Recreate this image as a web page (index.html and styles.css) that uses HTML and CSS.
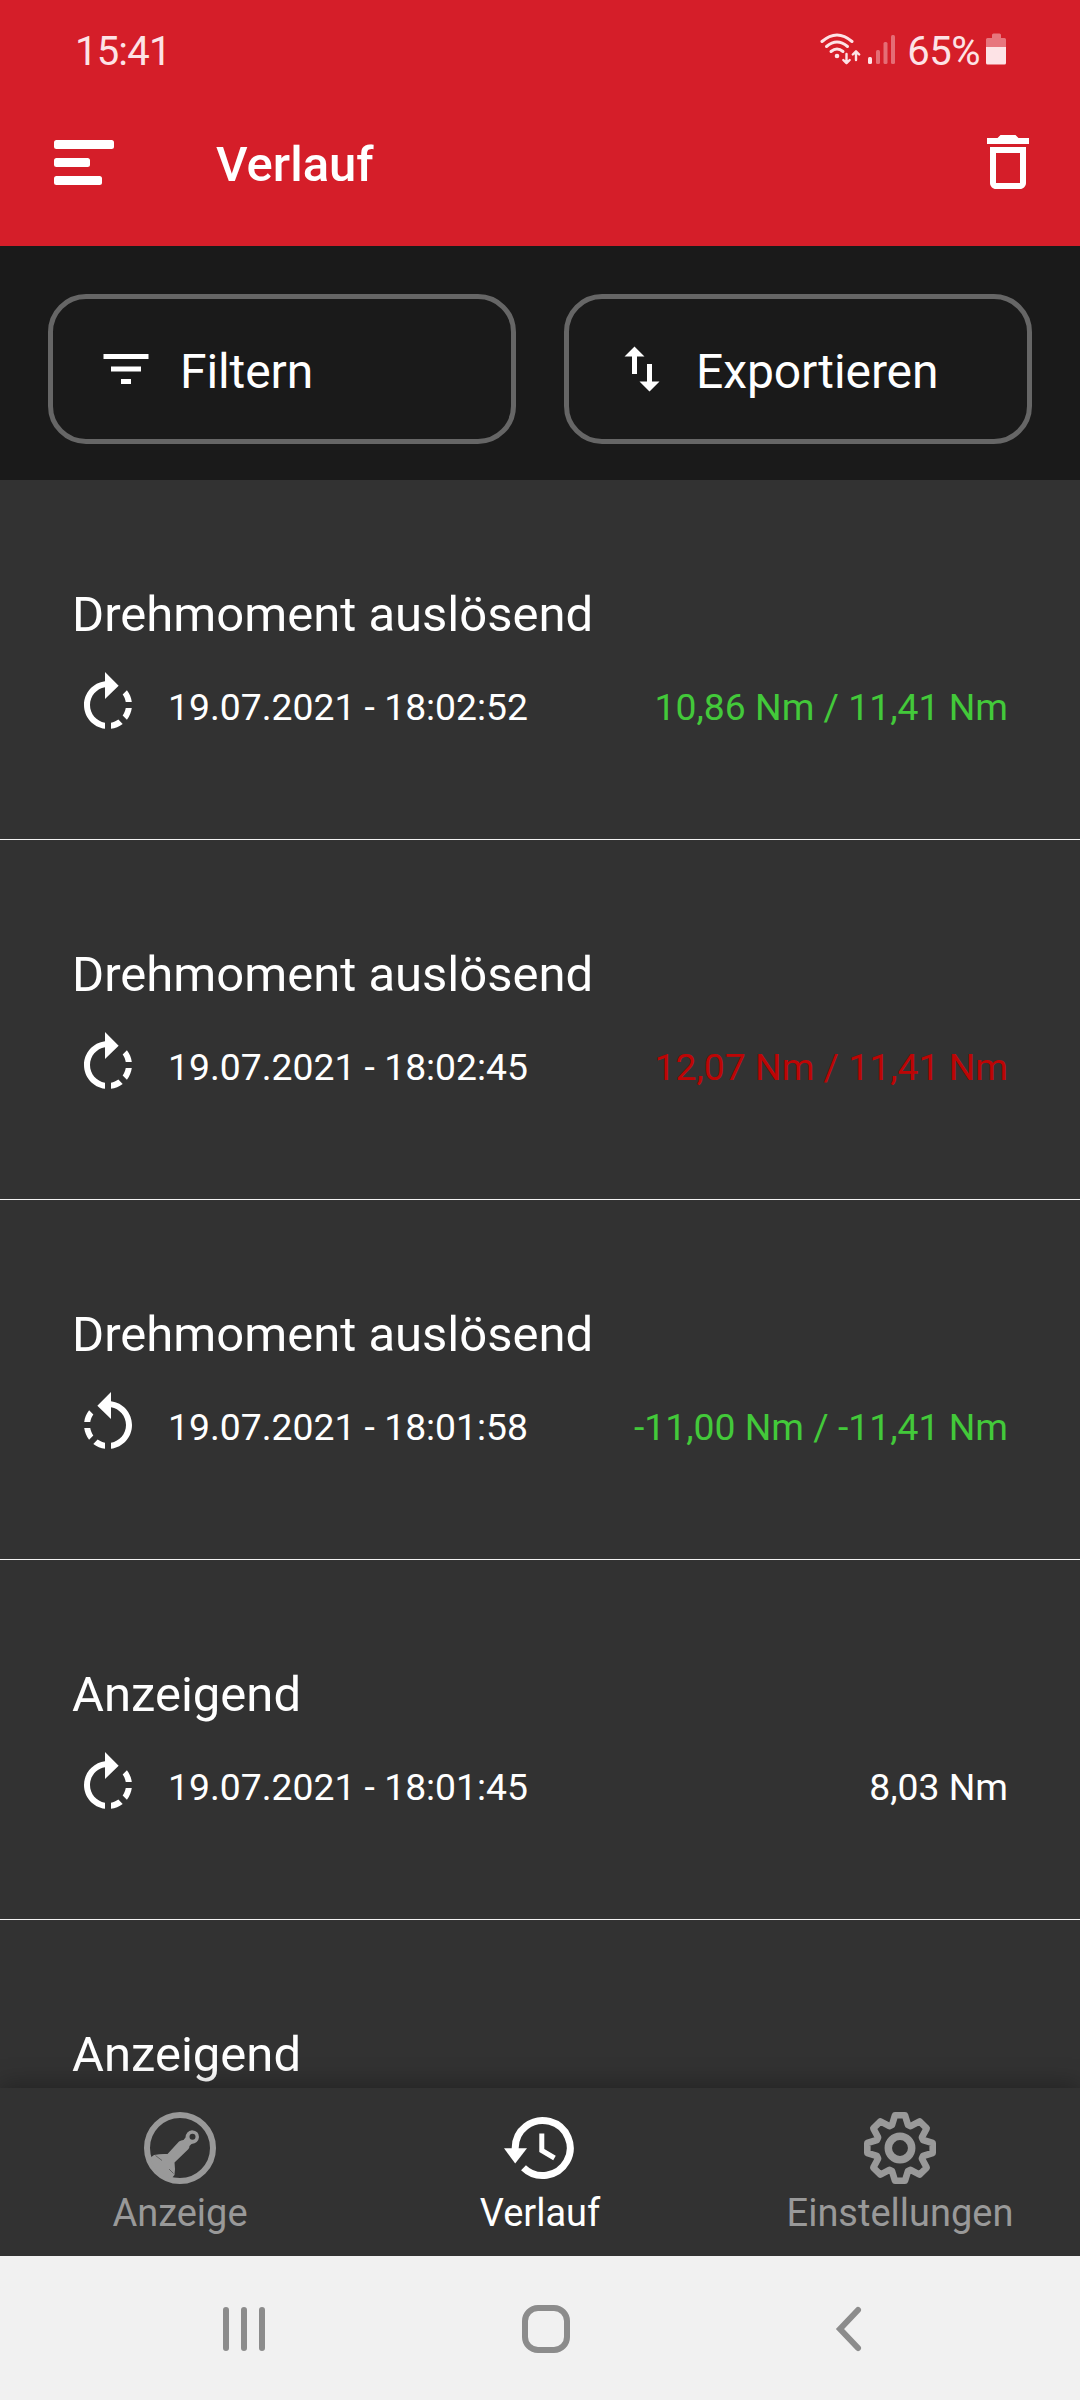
FILE: index.html
```html
<!DOCTYPE html>
<html lang="de">
<head>
<meta charset="utf-8">
<title>Verlauf</title>
<link rel="stylesheet" href="styles.css">
</head>
<body>
<svg class="sprite" aria-hidden="true">
  <symbol id="rotate-right" viewBox="0 0 24 24"><path d="M15.55 5.55L11 1v3.07C7.06 4.56 4 7.92 4 12s3.05 7.44 7 7.93v-2.02c-2.84-.48-5-2.94-5-5.91s2.16-5.43 5-5.91V10l4.55-4.45zM19.93 11c-.17-1.39-.72-2.73-1.62-3.89l-1.42 1.42c.54.75.88 1.6 1.02 2.47h2.02zM13 17.9v2.02c1.39-.17 2.74-.71 3.9-1.61l-1.44-1.44c-.75.54-1.59.89-2.46 1.03zm3.89-2.42l1.42 1.41c.9-1.16 1.45-2.5 1.62-3.89h-2.02c-.14.87-.48 1.72-1.02 2.48z"/></symbol>
  <symbol id="rotate-left" viewBox="0 0 24 24"><path d="M7.11 8.53L5.7 7.11C4.8 8.27 4.24 9.61 4.07 11h2.02c.14-.87.49-1.72 1.02-2.47zM6.09 13H4.07c.17 1.39.72 2.73 1.62 3.89l1.41-1.42c-.52-.75-.87-1.59-1.01-2.47zm1.01 5.32c1.16.9 2.51 1.44 3.9 1.61V17.9c-.87-.15-1.71-.49-2.46-1.03L7.1 18.32zM13 4.07V1L8.45 5.55 13 10V6.09c2.84.48 5 2.94 5 5.91s-2.16 5.43-5 5.91v2.02c3.95-.49 7-3.85 7-7.93s-3.05-7.44-7-7.93z"/></symbol>
</svg>
<div class="screen">
  <header class="header">
    <div class="status">
      <span class="clock">15:41</span>
      <div class="status-right">
        <svg class="status-icons" width="78" height="36" viewBox="0 0 78 36">
          <g fill="none" stroke="currentColor" stroke-width="3" stroke-linecap="round">
            <path d="M3 10.5Q18 -2.5 33 10.5"/>
            <path d="M7.5 15.5Q18 6.5 28.500 15.500"/>
            <path d="M12 20.500Q18 15.500 24 20.500"/>
          </g>
          <circle cx="18" cy="25" r="2.300" fill="currentColor"/>
          <g fill="none" stroke="currentColor" stroke-width="2.400" stroke-linecap="round" stroke-linejoin="round">
            <path d="M27.500 23v9M24.300 29l3.200 3.200 3.200-3.200"/>
            <path d="M37 29v-8.500M33.800 23.500l3.200-3.200 3.200 3.200"/>
          </g>
          <rect x="49" y="26" width="4" height="7" rx="1.500" fill="currentColor"/>
          <g fill="currentColor" opacity=".4">
            <rect x="57" y="19" width="4" height="14" rx="1.500"/>
            <rect x="64.500" y="11" width="4" height="22" rx="1.500"/>
            <rect x="72" y="4" width="4" height="29" rx="1.500"/>
          </g>
        </svg>
        <span class="percent">65%</span>
        <svg class="battery" width="20" height="32" viewBox="0 0 20 32">
          <path opacity=".45" fill="currentColor" d="M6 2q0-1.500 1.500-1.500h6q1.500 0 1.500 1.500v3h3.500q1.500 0 1.500 1.500V14H0V6.500Q0 5 1.500 5H6z"/>
          <path fill="currentColor" d="M0 14h20v16q0 1.500-1.500 1.500h-17Q0 31.500 0 30z"/>
        </svg>
      </div>
    </div>
    <div class="appbar">
      <svg class="menu" width="60" height="46" viewBox="0 0 60 46" fill="#fff"><rect width="60" height="9" rx="2.500"/><rect y="18" width="36" height="9" rx="2.500"/><rect y="36" width="48" height="9" rx="2.500"/></svg>
      <h1 class="title">Verlauf</h1>
      <svg class="icon-72" viewBox="0 0 24 24"><path d="M6 19c0 1.100.9 2 2 2h8c1.100 0 2-.9 2-2V7H6v12zM8 9h8v10H8V9zm7.500-5l-1-1h-5l-1 1H5v2h14V4h-3.500z"/></svg>
    </div>
  </header>

  <div class="actions">
    <button class="action"><svg class="icon-60" viewBox="0 0 24 24"><path d="M10 18h4v-2h-4v2zM3 6v2h18V6H3zm3 7h12v-2H6v2z"/></svg><span>Filtern</span></button>
    <button class="action"><svg class="icon-60" viewBox="0 0 24 24"><path d="M16 17.010V10h-2v7.010h-3L15 21l4-3.990h-3zM9 3L5 6.990h3V14h2V6.990h3L9 3z"/></svg><span>Exportieren</span></button>
  </div>

  <main class="list">
    <article class="entry">
      <h2 class="entry-title">Drehmoment auslösend</h2>
      <div class="entry-row"><svg class="icon-72"><use href="#rotate-right"/></svg><span class="date">19.07.2021 - 18:02:52</span><span class="value ok">10,86 Nm / 11,41 Nm</span></div>
    </article>
    <article class="entry">
      <h2 class="entry-title">Drehmoment auslösend</h2>
      <div class="entry-row"><svg class="icon-72"><use href="#rotate-right"/></svg><span class="date">19.07.2021 - 18:02:45</span><span class="value bad">12,07 Nm / 11,41 Nm</span></div>
    </article>
    <article class="entry">
      <h2 class="entry-title">Drehmoment auslösend</h2>
      <div class="entry-row"><svg class="icon-72"><use href="#rotate-left"/></svg><span class="date">19.07.2021 - 18:01:58</span><span class="value ok">-11,00 Nm / -11,41 Nm</span></div>
    </article>
    <article class="entry">
      <h2 class="entry-title">Anzeigend</h2>
      <div class="entry-row"><svg class="icon-72"><use href="#rotate-right"/></svg><span class="date">19.07.2021 - 18:01:45</span><span class="value">8,03 Nm</span></div>
    </article>
    <article class="entry">
      <h2 class="entry-title">Anzeigend</h2>
    </article>
  </main>

  <nav class="tabs">
    <a class="tab">
      <svg class="icon-72" viewBox="0 0 72 72">
        <circle cx="36" cy="36" r="33" fill="none" stroke="currentColor" stroke-width="6"/>
        <path d="M6 46L10 43Q17 41.500 23.500 42L35 29.500Q37 28 39.500 28L41.500 25.500Q42 19 48 18.200Q55 19 55 25Q54.500 31 47.500 32L45.500 34Q45.500 36 44 37.500L30.500 50.500Q31.500 57 30.500 63L27 67L14 62Z"/>
        <circle cx="48.500" cy="24.700" r="3" fill="#323232"/>
        <path d="M11.500 43.500l6.500 5M25 57l4.500 4.500" stroke="#555" stroke-width=".8" fill="none"/>
      </svg>
      <span>Anzeige</span>
    </a>
    <a class="tab active">
      <svg class="icon-72" viewBox="0 0 72 72">
        <g fill="none" stroke="currentColor" stroke-width="7">
          <path d="M11.200 37V36A27.500 27.500 0 1 1 19.500 55.700"/>
          <path d="M37.800 21.500V38.500L50.500 46" stroke-width="5"/>
        </g>
        <path d="M0 36.300H23L11.200 51.500Z"/>
      </svg>
      <span>Verlauf</span>
    </a>
    <a class="tab">
      <svg class="icon-72" viewBox="-36 -36 72 72">
        <g fill="none" stroke="currentColor" stroke-width="6.600" stroke-linejoin="round">
          <path d="M-5 -32.700L5 -32.700L8 -23L10.600 -21.900L19.600 -26.700L26.700 -19.600L21.900 -10.600L23 -8L32.700 -5L32.700 5L23 8L21.900 10.600L26.700 19.600L19.600 26.700L10.600 21.900L8 23L5 32.700L-5 32.700L-8 23L-10.600 21.900L-19.600 26.700L-26.700 19.600L-21.900 10.600L-23 8L-32.700 5L-32.700 -5L-23 -8L-21.900 -10.600L-26.700 -19.600L-19.600 -26.700L-10.600 -21.900L-8 -23Z"/>
          <circle r="11.700" stroke-width="7.500"/>
        </g>
      </svg>
      <span>Einstellungen</span>
    </a>
  </nav>

  <footer class="sysnav">
    <svg width="48" height="48" viewBox="0 0 48 48"><path d="M6 5v38M24 5v38M42 5v38"/></svg>
    <svg width="48" height="48" viewBox="0 0 48 48"><rect x="3" y="3" width="42" height="42" rx="13"/></svg>
    <svg width="48" height="48" viewBox="0 0 48 48"><path d="M34 5L16 24L34 43" stroke-linejoin="miter"/></svg>
  </footer>
</div>
</body>
</html>
```

FILE: styles.css
```css
* { box-sizing: border-box; }
body { margin: 0; font-family: Roboto, sans-serif; color: #fff; }
h1, h2 { margin: 0; }
svg { display: block; flex: none; }
.sprite { position: absolute; width: 0; height: 0; }
.screen { width: 1080px; height: 2400px; display: flex; flex-direction: column; background: #323232; overflow: hidden; }

.icon-72 { width: 72px; height: 72px; fill: currentColor; }
.icon-60 { width: 60px; height: 60px; fill: currentColor; }

.header { height: 246px; background: #d51e29; flex: none; }
.status { height: 84px; padding: 16px 74px 0 75px; display: flex; justify-content: space-between; align-items: flex-start; font-size: 40px; color: #fde3e6; }
.clock, .percent { line-height: 72px; }
.clock { letter-spacing: -.8px; }
.status-right { display: flex; align-items: flex-start; }
.status-icons { margin-top: 15px; }
.percent { margin-left: 10px; letter-spacing: -.5px; }
.battery { margin: 17px 0 0 6px; }
.appbar { height: 156px; padding: 0 36px 0 54px; display: flex; align-items: center; }
.menu { margin-top: 2px; }
.title { flex: 1; margin-left: 102px; padding-top: 5px; font-size: 49px; font-weight: 500; line-height: 56px; }

.actions { height: 234px; flex: none; background: #1a1a1a; padding: 48px; display: grid; grid-template-columns: 1fr 1fr; gap: 48px; align-items: start; }
.action { height: 150px; border: 5px solid #666; border-radius: 38px; background: none; color: inherit; font: 400 48px/56px Roboto, sans-serif; letter-spacing: -.1px; padding: 0 43px; display: flex; align-items: center; gap: 24px; text-align: left; }
.action span { padding-top: 5px; }

.list { flex: 1; min-height: 0; overflow: hidden; }
.entry { height: 360px; padding: 107px 72px 0; border-bottom: 1px solid #f4f4f4; }
.entry-title { font-size: 49px; font-weight: 400; line-height: 56px; }
.entry-row { margin-top: 26px; display: flex; align-items: center; font-size: 37.300px; line-height: 44px; }
.date { margin-left: 24px; padding-top: 3px; }
.value { margin-left: auto; padding-top: 3px; }
.ok { color: #43c93a; }
.bad { color: #bd0505; }

.tabs { position: relative; height: 168px; flex: none; background: #323232; box-shadow: 0 -2px 24px rgba(0, 0, 0, .35); display: grid; grid-template-columns: repeat(3, 1fr); }
.tab { padding-top: 24px; display: flex; flex-direction: column; align-items: center; color: #999; font-size: 38px; line-height: 44px; }
.tab span { margin-top: 7px; }
.active { color: #fff; }

.sysnav { position: relative; height: 144px; flex: none; background: #f1f1f1; display: flex; justify-content: space-between; align-items: center; padding: 2px 208px 0 220px; }
.sysnav svg { fill: none; stroke: #8c8c8c; stroke-width: 6; stroke-linecap: round; }
```
